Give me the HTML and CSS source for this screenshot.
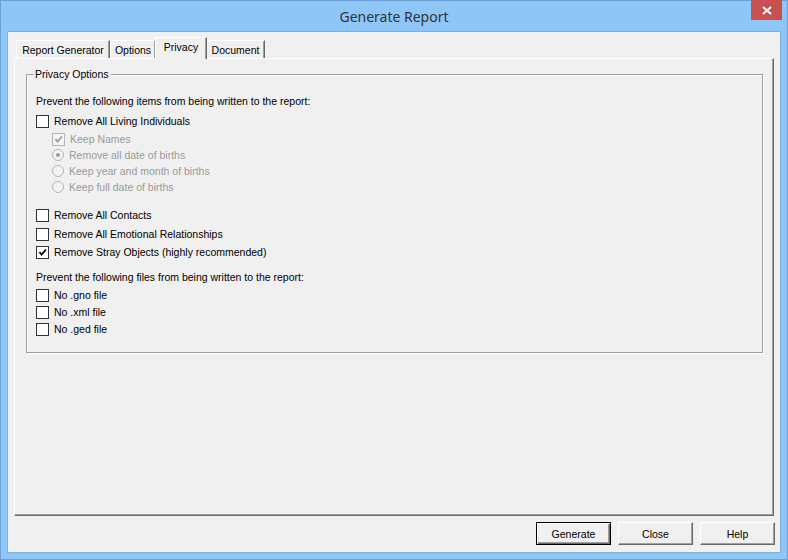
FILE: index.html
```html
<!DOCTYPE html>
<html lang="en">
<head>
  <meta charset="UTF-8">
  <link rel="stylesheet" href="styles.css">
  <title>Generate Report</title>
</head>
<body>
  <div class="janela">
    <div class="barra-titulo">
      <span></span>
      <span class="titulo">Generate Report</span>
      <span class="fechar-x">
        <svg width="10" height="9" viewBox="0 0 10 9"><path d="M1 1 L9 8 M9 1 L1 8" stroke="#fff" stroke-width="2"/></svg>
      </span>
    </div>

    <div class="cliente">
      <div class="abas">
        <div class="aba aba-rg">Report Generator</div>
        <div class="aba aba-op">Options</div>
        <div class="aba aba-ativa">Privacy</div>
        <div class="aba aba-doc">Document</div>
      </div>

      <div class="painel">
        <fieldset class="grupo">
          <legend>Privacy Options</legend>

          <div class="linha m11">Prevent the following items from being written to the report:</div>

          <div class="linha opcao m4"><span class="caixa"></span>Remove All Living Individuals</div>

          <div class="sub">
            <div class="linha opcao m2 desativado"><span class="caixa marcada"><svg width="11" height="11" viewBox="0 0 11 11"><path d="M2.5 5 L4.5 7.5 L9 2.5" fill="none" stroke="#9a9a9a" stroke-width="1.8"/></svg></span>Keep Names</div>
            <div class="linha opcao desativado"><span class="radio"><span class="ponto"></span></span>Remove all date of births</div>
            <div class="linha opcao desativado"><span class="radio"></span>Keep year and month of births</div>
            <div class="linha opcao desativado"><span class="radio"></span>Keep full date of births</div>
          </div>

          <div class="linha opcao m12"><span class="caixa"></span>Remove All Contacts</div>
          <div class="linha opcao m3"><span class="caixa"></span>Remove All Emotional Relationships</div>
          <div class="linha opcao m2"><span class="caixa"><svg width="11" height="11" viewBox="0 0 11 11"><path d="M2.5 5 L4.5 7.5 L9 2.5" fill="none" stroke="#000" stroke-width="1.8"/></svg></span>Remove Stray Objects (highly recommended)</div>

          <div class="linha m9">Prevent the following files from being written to the report:</div>
          <div class="linha opcao m2"><span class="caixa"></span>No .gno file</div>
          <div class="linha opcao m1"><span class="caixa"></span>No .xml file</div>
          <div class="linha opcao m1"><span class="caixa"></span>No .ged file</div>
        </fieldset>
      </div>

      <div class="botoes">
        <button class="botao padrao">Generate</button>
        <button class="botao">Close</button>
        <button class="botao">Help</button>
      </div>
    </div>
  </div>
</body>
</html>
```

FILE: styles.css
```css
body {
  margin: 0;
  padding: 0;
  font-family: 'Liberation Sans', Arial, sans-serif;
  font-size: 10.5px;
  color: #000;
}

.janela {
  width: 788px;
  height: 560px;
  box-sizing: border-box;
  border: 1px solid #6d9fd3;
  background-color: #8ec6f8;
  display: flex;
  flex-direction: column;
}

.barra-titulo {
  height: 30px;
  display: grid;
  grid-template-columns: 1fr auto 1fr;
}

.titulo {
  align-self: center;
  font-family: 'Noto Sans', 'Open Sans', sans-serif;
  font-size: 14px;
  color: #333;
  margin-top: 1px;
}

.fechar-x {
  justify-self: end;
  align-self: start;
  width: 31px;
  height: 20px;
  margin-top: -1px;
  margin-right: 5px;
  background-color: #c75050;
  display: flex;
  justify-content: center;
  align-items: center;
}

.cliente {
  flex: 1;
  margin: 0 6px 6px 6px;
  border: 1px solid #7eb0e0;
  background-color: #f0f0f0;
  padding: 5px 5px 0 6px;
  display: flex;
  flex-direction: column;
}

/* abas */
.abas {
  display: flex;
  align-items: flex-end;
  height: 21px;
  padding-left: 2px;
}

.aba {
  height: 18px;
  box-sizing: border-box;
  border-top: 1px solid #fff;
  border-left: 1px solid #fff;
  border-right: 1px solid #696969;
  box-shadow: inset -1px 0 0 #a0a0a0;
  line-height: 16px;
  padding-top: 1px;
  text-align: center;
}

.aba-rg { width: 94px; }
.aba-op { width: 46px; }
.aba-doc { width: 59px; }

.aba-ativa {
  width: 52px;
  height: 22px;
  margin: 0 -1px -1px -1px;
  background-color: #f0f0f0;
  position: relative;
  z-index: 1;
}

.painel {
  width: 760px;
  height: 458px;
  box-sizing: border-box;
  border-top: 1px solid #fff;
  border-left: 1px solid #fff;
  border-right: 1px solid #696969;
  border-bottom: 1px solid #696969;
  box-shadow: inset -1px -1px 0 #a0a0a0;
  padding: 7px 0 0 11px;
}

.grupo {
  margin: 0;
  width: 737px;
  height: 287px;
  box-sizing: border-box;
  border: 1px solid #a0a0a0;
  box-shadow: inset 1px 1px 0 #fff, 1px 1px 0 #fff;
  padding: 0 0 0 7px;
}

.grupo legend {
  padding: 0 2px 0 1px;
  line-height: 16px;
}

.linha {
  height: 16px;
  line-height: 16px;
  display: flex;
  align-items: center;
  padding-left: 2px;
  white-space: nowrap;
}

.m1 { margin-top: 1px; }
.m2 { margin-top: 2px; }
.m3 { margin-top: 3px; }
.m4 { margin-top: 4px; }
.m9 { margin-top: 9px; }
.m11 { margin-top: 11px; }
.m12 { margin-top: 12px; }

.caixa {
  width: 13px;
  height: 13px;
  box-sizing: border-box;
  border: 1px solid #333;
  background-color: #fff;
  margin-right: 5px;
  display: flex;
  justify-content: center;
  align-items: center;
}

.sub {
  padding-left: 16px;
}

.desativado {
  color: #9a9a9a;
}

.desativado .caixa {
  border-color: #b5b5b5;
  background-color: #f4f4f4;
}

.radio {
  width: 12px;
  height: 12px;
  box-sizing: border-box;
  border: 1px solid #b5b5b5;
  border-radius: 50%;
  background-color: #f4f4f4;
  margin-right: 5px;
  display: flex;
  justify-content: center;
  align-items: center;
}

.ponto {
  width: 4px;
  height: 4px;
  border-radius: 50%;
  background-color: #9a9a9a;
}

/* botoes */
.botoes {
  display: flex;
  justify-content: flex-end;
  gap: 7px;
  margin-top: 6px;
}

.botao {
  width: 75px;
  height: 23px;
  font-family: 'Liberation Sans', Arial, sans-serif;
  font-size: 10.5px;
  color: #000;
  background-color: #f0f0f0;
  border-top: 1px solid #fff;
  border-left: 1px solid #fff;
  border-right: 1px solid #696969;
  border-bottom: 1px solid #696969;
  box-shadow: inset -1px -1px 0 #a0a0a0;
  padding: 0;
}

.padrao {
  border: 1px solid #000;
  box-shadow: inset 1px 1px 0 #fff, inset -1px -1px 0 #696969, inset -2px -2px 0 #a0a0a0;
}
```
